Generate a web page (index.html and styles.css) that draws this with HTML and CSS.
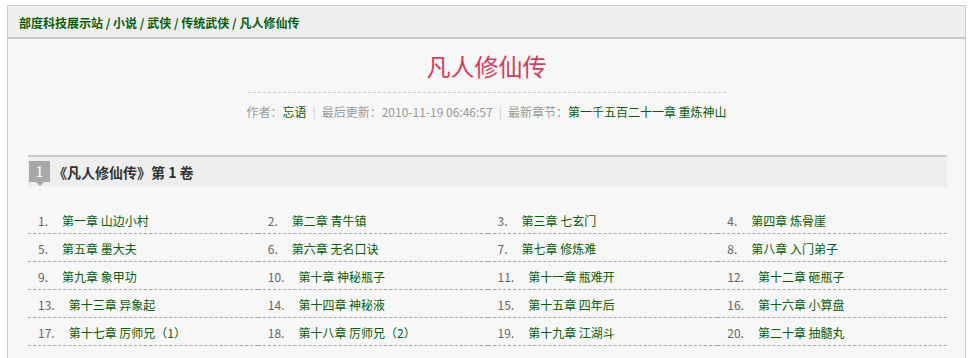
FILE: index.html
```html
<!DOCTYPE html>
<html lang="zh-CN">
<head>
  <meta charset="UTF-8" />
  <title>凡人修仙传</title>
  <link rel="stylesheet" href="styles.css">
</head>
<body>
  <div class="box">
    <div class="crumb">
      <a href="#">部度科技展示站</a> / <a href="#">小说</a> / <a href="#">武侠</a> / <a href="#">传统武侠</a> / <a href="#">凡人修仙传</a>
    </div>

    <div class="info">
      <h1 class="title">凡人修仙传</h1>
      <div class="meta">
        作者：<a href="#">忘语</a><span class="sep">|</span>最后更新：2010-11-19 06:46:57<span class="sep">|</span>最新章节：<a href="#">第一千五百二十一章 重炼神山</a>
      </div>
    </div>

    <div class="volume">
      <div class="vol-head">
        <span class="vol-num">1</span>
        <span class="vol-name">《凡人修仙传》第 1 卷</span>
      </div>
      <ul class="chapters">
        <li><span class="no">1.</span><a href="#">第一章 山边小村</a></li>
        <li><span class="no">2.</span><a href="#">第二章 青牛镇</a></li>
        <li><span class="no">3.</span><a href="#">第三章 七玄门</a></li>
        <li><span class="no">4.</span><a href="#">第四章 炼骨崖</a></li>
        <li><span class="no">5.</span><a href="#">第五章 墨大夫</a></li>
        <li><span class="no">6.</span><a href="#">第六章 无名口诀</a></li>
        <li><span class="no">7.</span><a href="#">第七章 修炼难</a></li>
        <li><span class="no">8.</span><a href="#">第八章 入门弟子</a></li>
        <li><span class="no">9.</span><a href="#">第九章 象甲功</a></li>
        <li><span class="no">10.</span><a href="#">第十章 神秘瓶子</a></li>
        <li><span class="no">11.</span><a href="#">第十一章 瓶难开</a></li>
        <li><span class="no">12.</span><a href="#">第十二章 砸瓶子</a></li>
        <li><span class="no">13.</span><a href="#">第十三章 异象起</a></li>
        <li><span class="no">14.</span><a href="#">第十四章 神秘液</a></li>
        <li><span class="no">15.</span><a href="#">第十五章 四年后</a></li>
        <li><span class="no">16.</span><a href="#">第十六章 小算盘</a></li>
        <li><span class="no">17.</span><a href="#">第十七章 厉师兄（1）</a></li>
        <li><span class="no">18.</span><a href="#">第十八章 厉师兄（2）</a></li>
        <li><span class="no">19.</span><a href="#">第十九章 江湖斗</a></li>
        <li><span class="no">20.</span><a href="#">第二十章 抽髓丸</a></li>
      </ul>
    </div>
  </div>
</body>
</html>
```

FILE: styles.css
```css
body {
  margin: 0;
  background: #fff;
  font-family: "Noto Sans CJK SC", "DejaVu Sans", sans-serif;
  font-size: 12px;
  color: #666;
}

a {
  color: #0b5d0b;
  text-decoration: none;
}

.box {
  margin: 5px 4px 0 7px;
  width: 957px;
  height: 360px;
  border: 1px solid #cfcfcf;
  border-bottom: none;
  background: #f7f7f7;
}

.crumb {
  height: 31px;
  line-height: 33px;
  padding-left: 11px;
  background: #eee;
  border-bottom: 2px solid #c8c8c8;
  font-weight: bold;
  color: #0b5d0b;
}

.info {
  width: 490px;
  margin: 0 auto;
  display: flex;
  flex-direction: column;
  align-items: center;
}

.title {
  align-self: stretch;
  margin: 0 6px;
  padding-top: 10px;
  height: 43px;
  line-height: 34px;
  text-align: center;
  font-size: 24px;
  font-weight: normal;
  color: #d0405e;
  border-bottom: 1px dashed #ccc;
}

.meta {
  white-space: nowrap;
  line-height: 38px;
  color: #999;
}

.sep {
  color: #ccc;
  margin: 0 6px;
}

.volume {
  margin: 24px 18px 0 20px;
}

.vol-head {
  height: 29px;
  background: #eee;
  border-top: 2px solid #ccc;
  display: flex;
  align-items: center;
}

.vol-num {
  position: relative;
  width: 21px;
  height: 21px;
  margin: 0 3px 0 1px;
  background: #a8a8a8;
  color: #fff;
  font-family: "Liberation Serif", serif;
  font-size: 17px;
  line-height: 21px;
  text-align: center;
}

.vol-num::after {
  content: "";
  position: absolute;
  left: 7px;
  top: 21px;
  border: 4px solid transparent;
  border-top-color: #a8a8a8;
}

.vol-name {
  font-size: 14px;
  font-weight: bold;
  color: #333;
}

.chapters {
  list-style: none;
  margin: 20px 0 0;
  padding: 0;
  display: grid;
  grid-template-columns: repeat(4, 1fr);
}

.chapters li {
  height: 27px;
  line-height: 30px;
  border-bottom: 1px dashed #a8a8a8;
  padding-left: 10px;
  white-space: nowrap;
}

.no {
  color: #666;
  margin-right: 14px;
}
```
